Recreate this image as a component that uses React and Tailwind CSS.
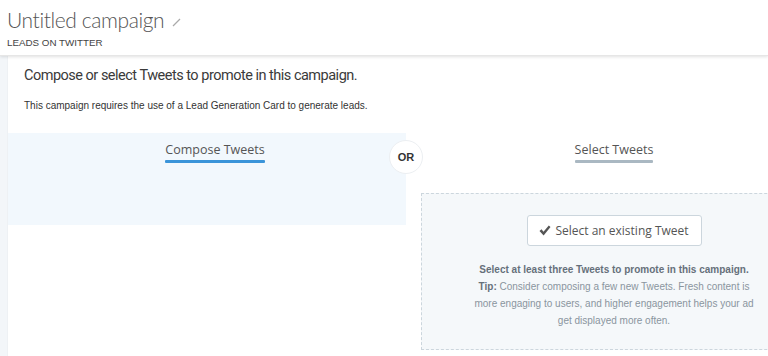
export default function App() {
  return (
    <div className="w-[768px] h-[356px] overflow-hidden bg-white" style={{ fontFamily: '"Liberation Sans", Arial, sans-serif' }}>
      <div className="relative z-10 h-[56px] bg-white shadow-[0_1px_3px_rgba(0,0,0,0.12)] border-b border-[#e6e6e6] pl-[7px] pt-[6px]">
        <div className="flex items-center gap-[8px]">
          <span className="text-[21px] leading-[28px] font-light text-[#555] tracking-[-0.4px]" style={{ fontFamily: 'Lato, sans-serif' }}>Untitled campaign</span>
          <svg width="9" height="9" viewBox="0 0 9 9" className="mt-[4px]">
            <line x1="1" y1="8" x2="8" y2="1" stroke="#aaa" strokeWidth="1.3" />
          </svg>
        </div>
        <div className="text-[9.8px] leading-[12px] text-[#444] uppercase mt-[3px]">Leads on Twitter</div>
      </div>
      <div className="flex h-[300px]">
        <div className="w-[8px] bg-[#f3f6f9] border-r border-[#eef1f4] shrink-0" />
        <div className="flex-1 flex flex-col">
          <div className="pl-[16px] pt-[10px]">
            <div className="text-[14.5px] leading-[20px] text-[#3a3a3a] tracking-[-0.5px]" style={{ fontFamily: 'Roboto, sans-serif' }}>Compose or select Tweets to promote in this campaign.</div>
            <div className="text-[10px] leading-[14px] text-[#333] mt-[13px]">This campaign requires the use of a Lead Generation Card to generate leads.</div>
          </div>
          <div className="flex mt-[20px]">
            <div className="w-[398px] h-[92px] bg-[#f2f8fd] shrink-0 flex justify-center pl-[16px] pt-[8px]">
              <div className="h-fit">
                <div className="text-[12.5px] leading-[18px] text-[#555]" style={{ fontFamily: '"Open Sans", sans-serif' }}>Compose Tweets</div>
                <div className="h-[3px] bg-[#3b94d9] mt-[1px] rounded-[1px]" />
              </div>
            </div>
            <div className="relative w-0">
              <div className="absolute left-[-17px] top-[7px] w-[34px] h-[34px] rounded-full bg-white border border-[#eceff2] flex items-center justify-center text-[11px] font-bold text-[#333]">OR</div>
            </div>
            <div className="w-[416px] shrink-0 flex flex-col items-center pt-[8px]">
              <div>
                <div className="text-[12.5px] leading-[18px] text-[#555]" style={{ fontFamily: '"Open Sans", sans-serif' }}>Select Tweets</div>
                <div className="h-[3px] bg-[#aab8c2] mt-[1px] rounded-[1px]" />
              </div>
              <div className="mt-[30px] w-[386px] h-[157px] bg-[#f5f8fa] border border-dashed border-[#ccd6dd] flex flex-col items-center pt-[21px]">
                <div className="w-[175px] h-[31px] bg-white border border-[#ccd6dd] rounded-[3px] flex items-center justify-center gap-[4px] text-[12px] text-[#555]" style={{ fontFamily: '"Open Sans", sans-serif' }}>
                  <svg width="12" height="11" viewBox="0 0 12 11">
                    <path d="M0.5 6 L2.5 4.2 L4.5 6.8 L9.8 0.5 L11.5 2 L4.6 10.5 Z" fill="#555" />
                  </svg>
                  <span>Select an existing Tweet</span>
                </div>
                <div className="mt-[15px] text-[10px] leading-[17px] text-[#8a959e] text-center w-[292px]">
                  <div className="font-bold text-[#66707a]">Select at least three Tweets to promote in this campaign.</div>
                  <div><span className="font-bold text-[#66707a]">Tip:</span> Consider composing a few new Tweets. Fresh content is more engaging to users, and higher engagement helps your ad get displayed more often.</div>
                </div>
              </div>
            </div>
          </div>
        </div>
      </div>
    </div>
  );
}
